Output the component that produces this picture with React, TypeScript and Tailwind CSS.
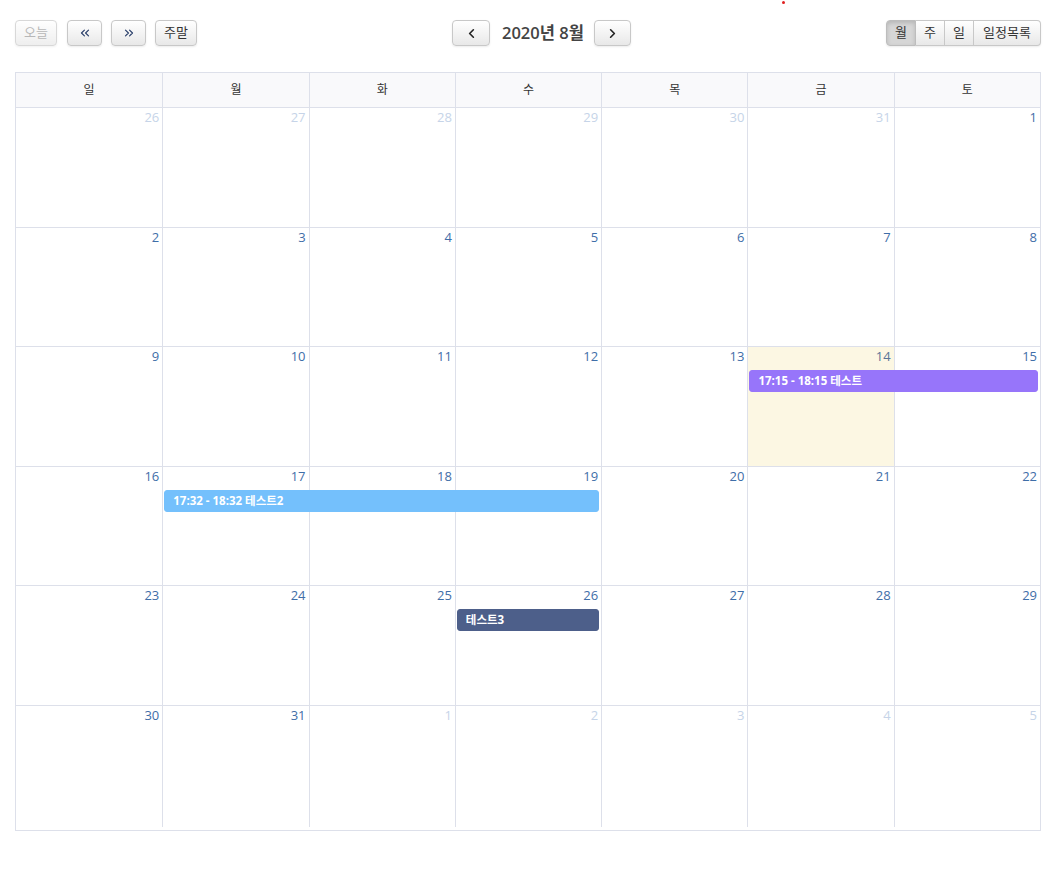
import React from "react";
import { ChevronLeft, ChevronRight, ChevronsLeft, ChevronsRight } from "lucide-react";

type Day = { n: number; other?: boolean; today?: boolean };

const weeks: Day[][] = [
  [
    { n: 26, other: true },
    { n: 27, other: true },
    { n: 28, other: true },
    { n: 29, other: true },
    { n: 30, other: true },
    { n: 31, other: true },
    { n: 1 },
  ],
  [2, 3, 4, 5, 6, 7, 8].map((n) => ({ n })),
  [9, 10, 11, 12, 13, 14, 15].map((n) => ({ n, today: n === 14 })),
  [16, 17, 18, 19, 20, 21, 22].map((n) => ({ n })),
  [23, 24, 25, 26, 27, 28, 29].map((n) => ({ n })),
  [
    { n: 30 },
    { n: 31 },
    { n: 1, other: true },
    { n: 2, other: true },
    { n: 3, other: true },
    { n: 4, other: true },
    { n: 5, other: true },
  ],
];

type Ev = { week: number; cls: string; text: string };
const events: Ev[] = [
  { week: 2, cls: "col-start-6 col-span-2 bg-[#9775fa] border-[#9775fa]", text: "17:15 - 18:15 테스트" },
  { week: 3, cls: "col-start-2 col-span-3 bg-[#74c0fc] border-[#74c0fc]", text: "17:32 - 18:32 테스트2" },
  { week: 4, cls: "col-start-4 col-span-1 bg-[#4d5f8a] border-[#4d5f8a]", text: "테스트3" },
];

const heads = ["일", "월", "화", "수", "목", "금", "토"];

const btn =
  "h-[26px] flex items-center justify-center whitespace-nowrap text-[13px] text-[#333] border border-[#c8c8c8] rounded-[4px] bg-gradient-to-b from-white to-[#e8e8e8] shadow-[inset_0_1px_0_rgba(255,255,255,0.3),0_1px_2px_rgba(0,0,0,0.08)]";

export default function App() {
  return (
    <div
      className="relative min-h-[877px] bg-white pl-[15px] pr-[20px] pt-[20px]"
      style={{ fontFamily: '"Open Sans", "Noto Sans CJK KR", sans-serif' }}
    >
      <div className="absolute left-[782px] top-[1px] w-[3px] h-[3px] rounded-full bg-[#e02020]" />
      {/* toolbar */}
      <div className="flex items-center h-[26px]">
        <div className="flex items-center w-[437px] shrink-0">
          <button className={btn + " w-[42px] text-[#999] opacity-70"}>오늘</button>
          <button className={btn + " w-[35px] ml-[10px]"}>
            <ChevronsLeft size={14} strokeWidth={2} className="text-[#2a3f6a]" />
          </button>
          <button className={btn + " w-[35px] ml-[9px]"}>
            <ChevronsRight size={14} strokeWidth={2} className="text-[#2a3f6a]" />
          </button>
          <button className={btn + " w-[42px] ml-[9px]"}>주말</button>
        </div>
        <div className="flex items-center shrink-0">
          <button className={btn + " w-[38px]"}>
            <ChevronLeft size={15} strokeWidth={2.6} className="text-[#222]" />
          </button>
          <h2 className="ml-[12px] mr-[11px] w-[81px] text-center whitespace-nowrap text-[16.5px] font-semibold text-[#444] leading-none">
            2020년 8월
          </h2>
          <button className={btn + " w-[37px]"}>
            <ChevronRight size={15} strokeWidth={2.6} className="text-[#222]" />
          </button>
        </div>
        <div className="flex-1 flex items-center justify-end">
          <div className="flex shadow-[0_1px_2px_rgba(0,0,0,0.08)] rounded-[4px]">
            <button className="h-[26px] w-[30px] flex items-center justify-center text-[13px] text-[#333] border border-[#bdbdbd] rounded-l-[4px] bg-[#d6d6d6] shadow-[inset_0_2px_4px_rgba(0,0,0,0.15)]">
              월
            </button>
            <button className="h-[26px] w-[29px] flex items-center justify-center text-[13px] text-[#333] border border-l-0 border-[#c8c8c8] bg-gradient-to-b from-white to-[#e8e8e8]">
              주
            </button>
            <button className="h-[26px] w-[29px] flex items-center justify-center text-[13px] text-[#333] border border-l-0 border-[#c8c8c8] bg-gradient-to-b from-white to-[#e8e8e8]">
              일
            </button>
            <button className="h-[26px] w-[67px] flex items-center justify-center whitespace-nowrap text-[13px] text-[#333] border border-l-0 border-[#c8c8c8] rounded-r-[4px] bg-gradient-to-b from-white to-[#e8e8e8]">
              일정목록
            </button>
          </div>
        </div>
      </div>

      {/* calendar */}
      <div className="mt-[26px] border border-[#dde0ea]">
        <div className="grid grid-cols-7 h-[34px] bg-[#f9f9fb]">
          {heads.map((h, i) => (
            <div
              key={h}
              className={
                "flex items-center justify-center text-[12px] text-[#333] " +
                (i > 0 ? "border-l border-[#dde0ea]" : "")
              }
            >
              {h}
            </div>
          ))}
        </div>
        {weeks.map((w, wi) => (
          <div
            key={wi}
            className={
              "relative border-t border-[#dde0ea] " +
              (wi === 5 ? "h-[125px] pb-[3px]" : "h-[119.5px]")
            }
          >
            <div className="grid grid-cols-7 h-full">
              {w.map((d, di) => (
                <div
                  key={di}
                  className={
                    "flex justify-end pr-[3px] pt-0 " +
                    (di > 0 ? "border-l border-[#dde0ea] " : "") +
                    (d.today ? "bg-[#fcf7e3] " : "")
                  }
                >
                  <span
                    className={
                      "text-[13px] leading-[18px] " +
                      (d.other ? "text-[#c6d4e8]" : d.today ? "text-[#5b7598]" : "text-[#3f6ea8]")
                    }
                  >
                    {d.n}
                  </span>
                </div>
              ))}
            </div>
            <div className="absolute left-0 right-0 top-[23px] grid grid-cols-7">
              {events
                .filter((e) => e.week === wi)
                .map((e, ei) => (
                  <div
                    key={ei}
                    className={
                      "ml-[2px] mr-[2px] h-[22px] rounded-[3px] border flex items-center pl-[8px] text-[11.5px] font-bold text-white whitespace-nowrap overflow-hidden " +
                      e.cls
                    }
                  >
                    {e.text}
                  </div>
                ))}
            </div>
          </div>
        ))}
      </div>
    </div>
  );
}
